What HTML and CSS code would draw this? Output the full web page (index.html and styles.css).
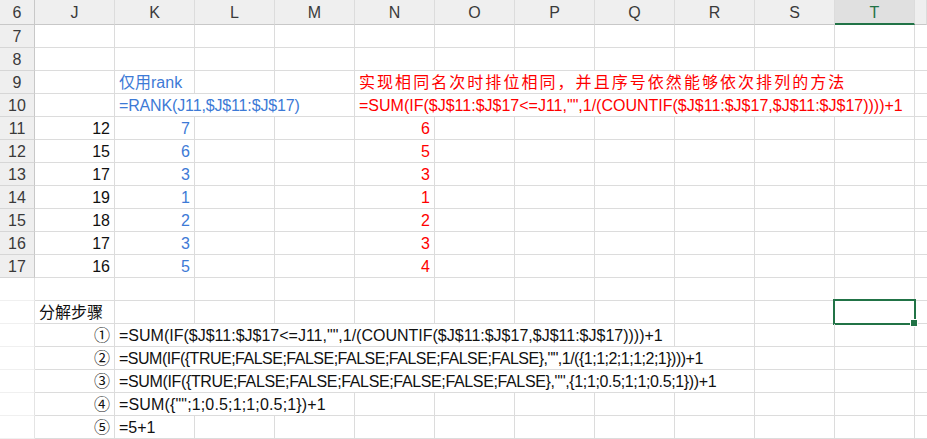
FILE: index.html
```html
<!DOCTYPE html>
<html lang="zh-CN">
<head>
<meta charset="utf-8">
<title>Sheet</title>
<link rel="stylesheet" href="styles.css">
</head>
<body>
<div class="sheet">
  <div class="row head">
    <div class="c rh">6</div>
    <div class="c ch">J</div><div class="c ch">K</div><div class="c ch">L</div><div class="c ch">M</div>
    <div class="c ch">N</div><div class="c ch">O</div><div class="c ch">P</div><div class="c ch">Q</div>
    <div class="c ch">R</div><div class="c ch">S</div><div class="c ch sel">T</div><div class="c ch last"></div>
  </div>

  <div class="row">
    <div class="c rh">7</div>
    <div class="c"></div><div class="c"></div><div class="c"></div><div class="c"></div><div class="c"></div><div class="c"></div>
    <div class="c"></div><div class="c"></div><div class="c"></div><div class="c"></div><div class="c"></div><div class="c last"></div>
  </div>
  <div class="row">
    <div class="c rh">8</div>
    <div class="c"></div><div class="c"></div><div class="c"></div><div class="c"></div><div class="c"></div><div class="c"></div>
    <div class="c"></div><div class="c"></div><div class="c"></div><div class="c"></div><div class="c"></div><div class="c last"></div>
  </div>
  <div class="row">
    <div class="c rh">9</div>
    <div class="c"></div>
    <div class="c blue">仅用rank</div>
    <div class="c"></div><div class="c"></div>
    <div class="c red s7 cjk">实现相同名次时排位相同，并且序号依然能够依次排列的方法</div>
    <div class="c last"></div>
  </div>
  <div class="row">
    <div class="c rh">10</div>
    <div class="c"></div>
    <div class="c blue s3 t-rank">=RANK(J11,$J$11:$J$17)</div>
    <div class="c red s7">=SUM(IF($J$11:$J$17&lt;=J11,"",1/(COUNTIF($J$11:$J$17,$J$11:$J$17))))+1</div>
    <div class="c last"></div>
  </div>

  <div class="row">
    <div class="c rh">11</div>
    <div class="c num">12</div><div class="c num blue">7</div><div class="c"></div><div class="c"></div><div class="c num red">6</div>
    <div class="c"></div><div class="c"></div><div class="c"></div><div class="c"></div><div class="c"></div><div class="c"></div><div class="c last"></div>
  </div>
  <div class="row">
    <div class="c rh">12</div>
    <div class="c num">15</div><div class="c num blue">6</div><div class="c"></div><div class="c"></div><div class="c num red">5</div>
    <div class="c"></div><div class="c"></div><div class="c"></div><div class="c"></div><div class="c"></div><div class="c"></div><div class="c last"></div>
  </div>
  <div class="row">
    <div class="c rh">13</div>
    <div class="c num">17</div><div class="c num blue">3</div><div class="c"></div><div class="c"></div><div class="c num red">3</div>
    <div class="c"></div><div class="c"></div><div class="c"></div><div class="c"></div><div class="c"></div><div class="c"></div><div class="c last"></div>
  </div>
  <div class="row">
    <div class="c rh">14</div>
    <div class="c num">19</div><div class="c num blue">1</div><div class="c"></div><div class="c"></div><div class="c num red">1</div>
    <div class="c"></div><div class="c"></div><div class="c"></div><div class="c"></div><div class="c"></div><div class="c"></div><div class="c last"></div>
  </div>
  <div class="row">
    <div class="c rh">15</div>
    <div class="c num">18</div><div class="c num blue">2</div><div class="c"></div><div class="c"></div><div class="c num red">2</div>
    <div class="c"></div><div class="c"></div><div class="c"></div><div class="c"></div><div class="c"></div><div class="c"></div><div class="c last"></div>
  </div>
  <div class="row">
    <div class="c rh">16</div>
    <div class="c num">17</div><div class="c num blue">3</div><div class="c"></div><div class="c"></div><div class="c num red">3</div>
    <div class="c"></div><div class="c"></div><div class="c"></div><div class="c"></div><div class="c"></div><div class="c"></div><div class="c last"></div>
  </div>
  <div class="row">
    <div class="c rh">17</div>
    <div class="c num">16</div><div class="c num blue">5</div><div class="c"></div><div class="c"></div><div class="c num red">4</div>
    <div class="c"></div><div class="c"></div><div class="c"></div><div class="c"></div><div class="c"></div><div class="c"></div><div class="c last"></div>
  </div>

  <div class="row">
    <div class="c rb"></div>
    <div class="c"></div><div class="c"></div><div class="c"></div><div class="c"></div><div class="c"></div><div class="c"></div>
    <div class="c"></div><div class="c"></div><div class="c"></div><div class="c"></div><div class="c"></div><div class="c last"></div>
  </div>
  <div class="row">
    <div class="c rb"></div>
    <div class="c">分解步骤</div>
    <div class="c"></div><div class="c"></div><div class="c"></div><div class="c"></div><div class="c"></div>
    <div class="c"></div><div class="c"></div><div class="c"></div><div class="c"></div><div class="c active"></div><div class="c last"></div>
  </div>
  <div class="row">
    <div class="c rb"></div>
    <div class="c num">①</div>
    <div class="c s7">=SUM(IF($J$11:$J$17&lt;=J11,"",1/(COUNTIF($J$11:$J$17,$J$11:$J$17))))+1</div>
    <div class="c"></div><div class="c"></div><div class="c"></div><div class="c last"></div>
  </div>
  <div class="row">
    <div class="c rb"></div>
    <div class="c num">②</div>
    <div class="c s8 t-two">=SUM(IF({TRUE;FALSE;FALSE;FALSE;FALSE;FALSE;FALSE},"",1/({1;1;2;1;1;2;1})))+1</div>
    <div class="c"></div><div class="c"></div><div class="c last"></div>
  </div>
  <div class="row">
    <div class="c rb"></div>
    <div class="c num">③</div>
    <div class="c s8 t-three">=SUM(IF({TRUE;FALSE;FALSE;FALSE;FALSE;FALSE;FALSE},"",{1;1;0.5;1;1;0.5;1}))+1</div>
    <div class="c"></div><div class="c"></div><div class="c last"></div>
  </div>
  <div class="row">
    <div class="c rb"></div>
    <div class="c num">④</div>
    <div class="c s3 t-four">=SUM({"";1;0.5;1;1;0.5;1})+1</div>
    <div class="c"></div><div class="c"></div><div class="c"></div><div class="c"></div><div class="c"></div><div class="c"></div><div class="c"></div><div class="c last"></div>
  </div>
  <div class="row">
    <div class="c rb"></div>
    <div class="c num">⑤</div>
    <div class="c">=5+1</div>
    <div class="c"></div><div class="c"></div><div class="c"></div><div class="c"></div><div class="c"></div><div class="c"></div>
    <div class="c"></div><div class="c"></div><div class="c"></div><div class="c last"></div>
  </div>
</div>
</body>
</html>
```

FILE: styles.css
```css
* { box-sizing: border-box; }

html, body {
  margin: 0;
  padding: 0;
  background: #ffffff;
}

body {
  width: 927px;
  height: 439px;
  overflow: hidden;
  font-family: "Liberation Sans", "Noto Sans CJK SC", sans-serif;
  font-size: 16px;
  color: #111;
}

.sheet {
  display: flex;
  flex-direction: column;
}

.row {
  display: grid;
  grid-template-columns: 35px repeat(11, 80px) 1fr;
  height: 23px;
}

.row.head {
  height: 25px;
}

.c {
  border-right: 1px solid #dcdcdc;
  border-bottom: 1px solid #dcdcdc;
  white-space: nowrap;
  overflow: visible;
  display: flex;
  align-items: flex-end;
  padding: 0 4px 0 4px;
  line-height: 20px;
  position: relative;
}

.c.last { border-right: none; }

.rh {
  background: #efefef;
  color: #3a3a3a;
  justify-content: center;
  border-right: 1px solid #c8c8c8;
  border-bottom: 1px solid #d6d6d6;
  padding: 0;
}

.rb {
  border-right: 1px solid #e4e4e4;
  border-bottom: 1px solid #f0f0f0;
}

.head .c {
  background: #efefef;
  color: #3a3a3a;
  justify-content: center;
  align-items: center;
  line-height: 20px;
  border-bottom: 1px solid #c8c8c8;
  border-right: 1px solid #dcdcdc;
  padding: 2px 0 0 0;
}

.head .c.rh {
  border-right: 1px solid #c8c8c8;
}

.head .c.sel {
  background: #e0e0e0;
  color: #217346;
  border-bottom: 2px solid #217346;
}

.num { justify-content: flex-end; }

.blue { color: #3d7ad6; }
.red { color: #ff0000; }

.cjk { letter-spacing: 2.05px; }
.t-rank { letter-spacing: -0.15px; }
.t-two { letter-spacing: -0.5px; }
.t-three { letter-spacing: -0.36px; }
.t-four { letter-spacing: 0.15px; }

.s3 { grid-column: span 3; }
.s7 { grid-column: span 7; }
.s8 { grid-column: span 8; }

.active::after {
  content: "";
  position: absolute;
  left: -2px;
  top: -2px;
  right: -2px;
  bottom: -2px;
  border: 2px solid #217346;
}

.active::before {
  content: "";
  position: absolute;
  right: -4px;
  bottom: -4px;
  width: 6px;
  height: 6px;
  background: #217346;
  border: 1px solid #ffffff;
  z-index: 2;
}
```
